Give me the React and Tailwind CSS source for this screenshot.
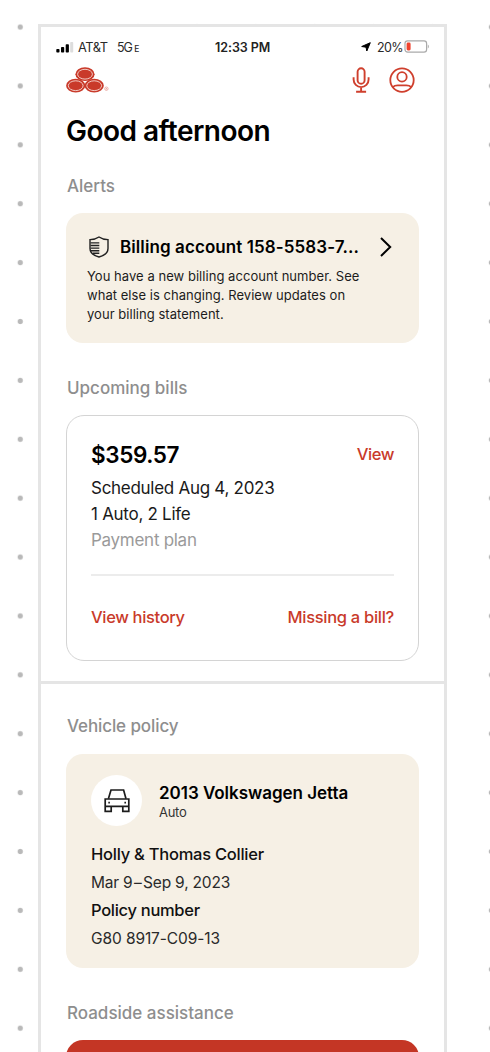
function LogoOval({ cx, cy }) {
  return (
    <g>
      <ellipse cx={cx} cy={cy} rx="9.6" ry="6.9" fill="#c93a2a" />
      <ellipse cx={cx} cy={cy} rx="7.4" ry="4.9" fill="none" stroke="#f6d9d4" strokeWidth="0.9" />
    </g>
  );
}

function Logo() {
  return (
    <svg className="h-[26px] w-[44px]" viewBox="0 0 44 26" fill="none">
      <LogoOval cx="19" cy="7.2" />
      <LogoOval cx="9.7" cy="18.7" />
      <LogoOval cx="28.2" cy="18.7" />
      <circle cx="40.4" cy="21.7" r="1.7" stroke="#e9a69f" strokeWidth="0.9" />
      <circle cx="40.4" cy="21.7" r="0.7" fill="#e9a69f" />
    </svg>
  );
}

function MicIcon() {
  return (
    <svg className="h-[27px] w-[18px]" viewBox="0 0 18 27" fill="none" stroke="#cf3f2d" strokeWidth="1.9">
      <rect x="5.6" y="1.3" width="7" height="15.4" rx="3.5" />
      <path d="M1.6 10.2v2.4a7.5 7.5 0 0 0 15 0v-2.4M9.1 20.2v4.6M4.1 24.7h10" />
    </svg>
  );
}

function ProfileIcon() {
  return (
    <svg className="h-[26px] w-[26px]" viewBox="0 0 26 26" fill="none" stroke="#cf3f2d" strokeWidth="1.8">
      <circle cx="13" cy="13.1" r="11.7" />
      <circle cx="13" cy="9.9" r="4.7" />
      <path d="M3.7 20.1c1.300-1.200 3-1.700 5-1.700h8.600c2 0 3.700.5 5 1.700" />
    </svg>
  );
}

function ShieldIcon() {
  return (
    <svg className="mt-px h-[22px] w-[20px]" viewBox="0 0 20 22" fill="none" stroke="#222" strokeWidth="1.4">
      <path d="M10 1C7.500 2.800 4.500 3.600 1 3.600v9c0 4 3.600 7 9 8.400 5.400-1.400 9-4.400 9-8.400v-9C15.500 3.600 12.500 2.800 10 1Z" />
      <path d="M1.500 6.900h8.800M1.500 9.500h8.800M1.500 12.100h8.800M2 14.700h8.300M3.700 17.300h6.600" />
    </svg>
  );
}

function CarIcon() {
  return (
    <svg className="h-[24px] w-[26px]" viewBox="0 0 26 24" fill="none" stroke="#1c1c1c" strokeWidth="1.7">
      <path d="M4.400 9.800 7 1h12.600l2.400 8.800" />
      <path d="M1.200 10h23.600v7.400H1.200zM1.200 17.400v5h6v-5M24.800 17.400v5h-6v-5" />
      <path d="M4.300 13.700h1.600M20.400 13.700H22" />
    </svg>
  );
}

function StatusBar() {
  return (
    <div className="flex h-5 pl-[15px] text-[12.5px] leading-[22px] text-[#2a2a2a]">
      <svg className="mt-[4px] h-3 w-[18px]" viewBox="0 0 18 12">
        <rect x="0.3" y="8" width="3.2" height="3.6" rx="0.8" fill="#000" />
        <rect x="5" y="6" width="3.2" height="5.6" rx="0.8" fill="#000" />
        <rect x="9.7" y="3.3" width="3.2" height="8.3" rx="0.8" fill="#000" />
        <rect x="14.2" y="1" width="3" height="10.6" rx="0.8" fill="#ddd" />
      </svg>
      <span className="ml-1 w-[39px] text-[12.8px] tracking-[-0.45px]">AT&amp;T</span>
      <span className="w-[98px] tracking-[-1.1px]">
        5G<span className="ml-[2.5px] text-[8.5px] font-medium">E</span>
      </span>
      <span className="w-[146px] font-semibold tracking-[-0.05px] text-[#222]">12:33 PM</span>
      <svg className="mt-[5px] h-[10px] w-[10px]" viewBox="0 0 10 10">
        <path d="M9.300.7 5.800 9 5 5.200.7 4.500Z" fill="#000" stroke="#000" strokeLinejoin="round" />
      </svg>
      <span className="ml-[6px] w-[27px] tracking-[-0.65px]">20%</span>
      <svg className="mt-[3px] h-[13px] w-[26px]" viewBox="0 0 26 13" fill="none">
        <rect x="1" y="0.9" width="21.6" height="11.2" rx="2.6" stroke="#aaa" strokeWidth="1.2" />
        <path d="M23.800 4.400v4c1.400-.6 1.400-3.400 0-4Z" fill="#aaa" />
        <rect x="2.6" y="2.5" width="4" height="8" rx="1.4" fill="#f0432f" />
      </svg>
    </div>
  );
}

function SectionTitle({ children, className = "" }) {
  return <h2 className={`pl-px text-[17px] leading-6 font-medium text-[#8e8e8e] ${className}`}>{children}</h2>;
}

export default function App() {
  return (
    <div className="h-[1052px] overflow-hidden bg-white bg-[radial-gradient(circle_at_center,#b9b9b9_2.2px,transparent_3.1px)] bg-[length:58.9px_58.9px] bg-[position:-9.2px_-2.4px] font-['Inter','Liberation_Sans',sans-serif] whitespace-nowrap text-black">
      <div className="pt-6 pl-[38px]">
        <main className="h-[1100px] w-[409px] border-[3px] border-[#e5e5e5] bg-white">
          <section className="h-[654px] pt-[10px]">
            <StatusBar />
            <header className="mt-[10px] flex h-[26px] pl-[25px]">
              <Logo />
              <div className="ml-[242px] flex gap-[19px]">
                <MicIcon />
                <ProfileIcon />
              </div>
            </header>
            <div className="w-[378px] pl-[25px]">
              <h1 className="mt-5 text-[28px] leading-9 font-semibold tracking-[-0.52px]">Good afternoon</h1>
              <SectionTitle className="mt-[25px]">Alerts</SectionTitle>
              <article className="mt-[15px] h-[130px] rounded-[17px] bg-[#f6f0e5] pt-[22px] pl-[21px]">
                <div className="flex h-6 pl-[2px]">
                  <ShieldIcon />
                  <h3 className="ml-[11px] w-[260px] text-[17px] leading-6 font-semibold tracking-[0.09px]">
                    Billing account 158-5583-7...
                  </h3>
                  <svg className="mt-[2px] h-5 w-3" viewBox="0 0 12 20" fill="none" stroke="#000" strokeWidth="2">
                    <path d="m1 1 9.200 9L1 19" />
                  </svg>
                </div>
                <p className="mt-2 text-[13px] leading-[19px] tracking-[0.04px] text-[#1c1c1c]">
                  You have a new billing account number. See
                  <br />
                  what else is changing. Review updates on
                  <br />
                  your billing statement.
                </p>
              </article>
              <SectionTitle className="mt-[33px]">Upcoming bills</SectionTitle>
              <article className="mt-[15px] h-[246px] rounded-[18px] border border-[#d4d4d4] px-6 pt-6">
                <div className="flex h-7 justify-between">
                  <span className="text-[22.5px] leading-[30px] font-semibold tracking-[-0.4px]">$359.57</span>
                  <a className="text-[16.5px] leading-7 font-medium tracking-[-0.4px] text-[#c93a2a]">View</a>
                </div>
                <div className="mt-[7px] text-[17px] leading-[26px] tracking-[-0.28px] text-[#1a1a1a]">
                  <p>Scheduled Aug 4, 2023</p>
                  <p>1 Auto, 2 Life</p>
                  <p className="text-[#9a9a9a]">Payment plan</p>
                </div>
                <hr className="mt-[21px] h-[2px] border-0 bg-[#ececec]" />
                <div className="mt-[29px] flex justify-between text-[16.5px] leading-6 font-medium text-[#c93a2a]">
                  <a className="tracking-[-0.35px]">View history</a>
                  <a className="tracking-[-0.29px]">Missing a bill?</a>
                </div>
              </article>
            </div>
          </section>
          <section className="border-t-[3px] border-[#e5e5e5] pt-[30px] pl-[25px]">
            <div className="w-[353px]">
              <SectionTitle className="tracking-[-0.1px]">Vehicle policy</SectionTitle>
              <article className="mt-4 h-[214px] rounded-[17px] bg-[#f6f0e5] pt-[21px] pl-[25px]">
                <div className="flex h-[51px]">
                  <div className="flex size-[51px] items-center justify-center rounded-full bg-white">
                    <CarIcon />
                  </div>
                  <div className="pt-[7px] pl-[17px]">
                    <h3 className="text-[17px] leading-[22px] font-semibold tracking-[-0.03px]">2013 Volkswagen Jetta</h3>
                    <p className="text-[13px] leading-[17px] tracking-[-0.3px] text-[#333]">Auto</p>
                  </div>
                </div>
                <div className="mt-[14px] leading-7 text-[#111]">
                  <p className="text-[16.5px] font-medium tracking-[-0.25px]">Holly &amp; Thomas Collier</p>
                  <p className="pt-px text-[15.5px] tracking-[-0.2px] text-[#2a2a2a]">
                    Mar 9<span className="mx-[1.5px]">–</span>Sep 9, 2023
                  </p>
                  <p className="text-[16.5px] leading-[27px] font-medium tracking-[-0.3px]">Policy number</p>
                  <p className="pt-px text-[15.5px] tracking-[-0.1px] text-[#2a2a2a]">G80 8917-C09-13</p>
                </div>
              </article>
              <SectionTitle className="mt-[33px]">Roadside assistance</SectionTitle>
              <div className="mt-[15px] h-20 rounded-[17px] bg-[#c43625]" />
            </div>
          </section>
        </main>
      </div>
    </div>
  );
}
